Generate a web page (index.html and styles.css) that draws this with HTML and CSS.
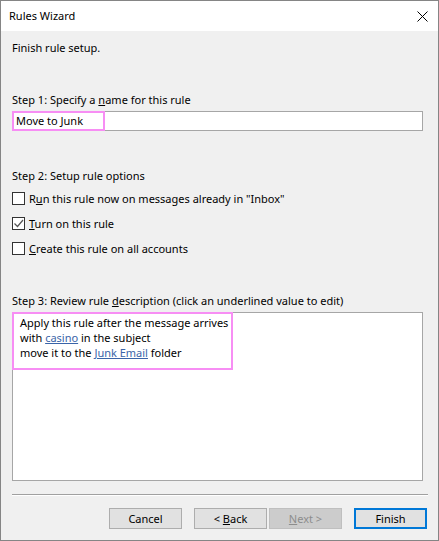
FILE: index.html
```html
<!DOCTYPE html>
<html>
<head>
<meta charset="utf-8">
<link rel="stylesheet" href="styles.css">
</head>
<body>
<div class="window">
  <div class="titlebar">
    <span class="title">Rules Wizard</span>
    <svg class="close" width="11" height="11" viewBox="0 0 11 11"><path d="M0.5 0.5 L10.5 10.5 M10.5 0.5 L0.5 10.5" stroke="#000" stroke-width="1" fill="none"/></svg>
  </div>
  <div class="content">
    <div class="line intro">Finish rule setup.</div>

    <div class="line step step1">Step 1: Specify a <u>n</u>ame for this rule</div>
    <div class="field">
      <div class="input">Move to Junk</div>
      <div class="mark mark-name"></div>
    </div>

    <div class="line step step2">Step 2: Setup rule options</div>
    <div class="options">
      <label class="option"><span class="box"></span><span>R<u>u</u>n this rule now on messages already in "Inbox"</span></label>
      <label class="option"><span class="box"><svg width="11" height="11" viewBox="0 0 11 11"><path d="M1.5 5.5 L4.5 8.5 L10 2" stroke="#555" stroke-width="1.2" fill="none"/></svg></span><span><u>T</u>urn on this rule</span></label>
      <label class="option"><span class="box"></span><span><u>C</u>reate this rule on all accounts</span></label>
    </div>

    <div class="line step step3">Step 3: Review rule <u>d</u>escription (click an underlined value to edit)</div>
    <div class="field">
      <div class="desc">
        <div class="line">Apply this rule after the message arrives</div>
        <div class="line">with <a class="link">casino</a> in the subject</div>
        <div class="line">move it to the <a class="link">Junk Email</a> folder</div>
      </div>
      <div class="mark mark-desc"></div>
    </div>

    <div class="separator"></div>

    <div class="buttons">
      <div class="btn"><span>Cancel</span></div>
      <div class="pair">
        <div class="btn"><span>&lt; <u>B</u>ack</span></div>
        <div class="btn disabled"><span><u>N</u>ext &gt;</span></div>
      </div>
      <div class="btn primary"><span>Finish</span></div>
    </div>
  </div>
</div>
</body>
</html>
```

FILE: styles.css
```css
* { box-sizing: border-box; }
html, body { margin: 0; padding: 0; }
body {
  font-family: "Noto Sans", "Open Sans", sans-serif;
  font-size: 11px;
  color: #000;
  background: #f0f0f0;
}
.window {
  width: 439px;
  height: 541px;
  border: 1px solid #858585;
  background: #f0f0f0;
  display: flex;
  flex-direction: column;
}
.titlebar {
  height: 30px;
  background: #fff;
  display: flex;
  align-items: center;
  justify-content: space-between;
  padding: 0 10px 0 8px;
}
.title { font-size: 11px; line-height: 30px; }
.close { display: block; }
.content {
  padding: 9px 11px 0 11px;
  flex: 1;
}
.line { line-height: 15px; height: 15px; white-space: nowrap; }
.step1 { margin-top: 37px; }
.step2 { margin-top: 37px; }
.step3 { margin-top: 37px; }
.field { position: relative; margin-top: 4px; width: 411px; }
.input {
  height: 20px;
  background: #fff;
  border: 1px solid #a6a6a6;
  padding: 0 0 0 3px;
  line-height: 18px;
}
.mark {
  position: absolute;
  left: 0;
  top: 0;
  border: 2px solid #f78ef4;
  pointer-events: none;
}
.mark-name { width: 93px; height: 20px; }
.mark-desc { width: 221px; height: 58px; }
.options { margin-top: 8px; display: flex; flex-direction: column; gap: 10px; }
.option {
  display: flex;
  align-items: center;
  height: 15px;
  line-height: 15px;
  gap: 4px;
  white-space: nowrap;
}
.box {
  width: 13px;
  height: 13px;
  border: 1px solid #333;
  background: #fff;
  display: flex;
  align-items: center;
  justify-content: center;
  flex: none;
}
.box svg { display: block; }
.desc {
  height: 169px;
  background: #fff;
  border: 1px solid #a6a6a6;
  padding: 2px 0 0 7px;
}
.link { color: #3a64a8; text-decoration: underline; }
.separator {
  margin-top: 13px;
  height: 2px;
  border-top: 1px solid #a0a0a0;
  border-bottom: 1px solid #fff;
  width: 416px;
}
.buttons {
  margin-top: 12px;
  display: flex;
  justify-content: flex-end;
  gap: 12px;
  width: 415px;
}
.pair { display: flex; gap: 2px; }
.btn {
  width: 73px;
  height: 21px;
  background: #e1e1e1;
  border: 1px solid #adadad;
  display: flex;
  align-items: center;
  justify-content: center;
  line-height: 15px;
  white-space: pre;
}
.btn.disabled { background: #cccccc; border-color: #bfbfbf; color: #8d8d8d; }
.btn.primary { border: 2px solid #0078d7; }
```
